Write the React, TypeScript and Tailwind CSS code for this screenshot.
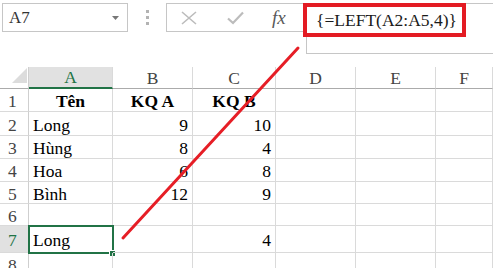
import React from 'react';

type Cell = { t?: string; a?: 'l' | 'r' | 'c'; b?: boolean };

const widths = ['w-[84px]', 'w-[80px]', 'w-[83px]', 'w-[80px]', 'w-[80px]', 'flex-1'];
const letters = ['A', 'B', 'C', 'D', 'E', 'F'];

const rows: { n: string; h: string; cells: Cell[] }[] = [
  { n: '1', h: 'h-[23px]', cells: [{ t: 'Tên', a: 'c', b: true }, { t: 'KQ A', a: 'c', b: true }, { t: 'KQ B', a: 'c', b: true }] },
  { n: '2', h: 'h-[24px]', cells: [{ t: 'Long' }, { t: '9', a: 'r' }, { t: '10', a: 'r' }] },
  { n: '3', h: 'h-[23px]', cells: [{ t: 'Hùng' }, { t: '8', a: 'r' }, { t: '4', a: 'r' }] },
  { n: '4', h: 'h-[23px]', cells: [{ t: 'Hoa' }, { t: '6', a: 'r' }, { t: '8', a: 'r' }] },
  { n: '5', h: 'h-[22px]', cells: [{ t: 'Bình' }, { t: '12', a: 'r' }, { t: '9', a: 'r' }] },
  { n: '6', h: 'h-[22px]', cells: [] },
  { n: '7', h: 'h-[27px]', cells: [{ t: 'Long' }, {}, { t: '4', a: 'r' }] },
  { n: '8', h: 'h-[23px]', cells: [] },
];

function alignClass(a?: 'l' | 'r' | 'c') {
  if (a === 'r') return 'justify-end pr-[4px]';
  if (a === 'c') return 'justify-center';
  return 'justify-start pl-[4px]';
}

function Toolbar() {
  return (
    <div className="h-[67px] flex items-start pt-[3px] pl-[2px]">
      {/* Name box */}
      <div className="w-[126px] h-[29px] border border-[#c6c6c6] flex items-center pl-[6px] text-[17px] text-[#333]">
        <span>A7</span>
        <svg className="ml-auto mr-[8px]" width="7" height="4" viewBox="0 0 7 4">
          <path d="M0 0 L7 0 L3.5 4 Z" fill="#777" />
        </svg>
      </div>

      {/* grip dots */}
      <div className="w-[38px] h-[29px] flex flex-col items-center justify-center gap-[3px]">
        <div className="w-[3px] h-[3px] bg-[#b3b3b3]" />
        <div className="w-[3px] h-[3px] bg-[#b3b3b3]" />
        <div className="w-[3px] h-[3px] bg-[#b3b3b3]" />
      </div>

      {/* Formula bar */}
      <div className="flex-1 flex items-start">
        <div className="w-[140px] h-[29px] border-l border-t border-b border-[#c6c6c6] flex items-center">
          <svg className="ml-[14px]" width="16" height="14" viewBox="0 0 16 14">
            <path d="M1 1 L15 13 M15 1 L1 13" stroke="#bcbcbc" strokeWidth="1.6" fill="none" />
          </svg>
          <svg className="ml-[30px]" width="17" height="14" viewBox="0 0 17 14">
            <path d="M1 7.5 L6 12 L16 1.5" stroke="#bcbcbc" strokeWidth="2.2" fill="none" />
          </svg>
          <span className="ml-[28px] italic text-[19px] text-[#595959] leading-none">fx</span>
        </div>
        <div className="flex-1 h-[51px] border-l border-t border-b border-[#c6c6c6] pl-[9px] pt-[6px] leading-[20px] text-[17.5px] text-[#1a1a1a]">
          {'{=LEFT(A2:A5,4)}'}
        </div>
      </div>
    </div>
  );
}

function HeaderRow() {
  return (
    <div className="flex h-[22px]">
      <div className="w-[29px] border-r border-b border-r-[#cfcfcf] border-b-[#ababab] relative">
        <svg className="absolute left-0 top-0" width="28" height="21" viewBox="0 0 28 21">
          <path d="M12 16 L27 1 L27 16 Z" fill="#dcdcdc" />
        </svg>
      </div>
      {letters.map((l, i) => (
        <div
          key={l}
          className={`${widths[i]} flex items-center justify-center border-r border-r-[#dadada] ${
            i === 0
              ? 'bg-[#e1e1e1] border-b-2 border-b-[#217346] text-[#217346]'
              : 'border-b border-b-[#ababab] text-[#444]'
          }`}
        >
          {l}
        </div>
      ))}
    </div>
  );
}

export default function App() {
  return (
    <div className="w-[493px] h-[268px] overflow-hidden relative bg-white font-['Liberation_Serif'] text-[17.5px] leading-[20px] text-black">
      <Toolbar />
      <HeaderRow />
      {rows.map(r => {
        const active = r.n === '7';
        return (
          <div key={r.n} className={`flex ${r.h}`}>
            <div
              className={`w-[29px] flex items-center pl-[8px] pt-[2px] border-r border-b border-r-[#cfcfcf] border-b-[#dadada] ${
                active ? 'bg-[#e1e1e1] text-[#217346]' : 'text-[#444]'
              }`}
            >
              {r.n}
            </div>
            {widths.map((w, i) => {
              const c = r.cells[i] || {};
              return (
                <div
                  key={i}
                  className={`${w} relative flex items-center pt-[2px] border-r border-b border-[#dadada] ${alignClass(c.a)} ${
                    c.b ? 'font-bold' : ''
                  }`}
                >
                  {c.t}
                  {active && i === 0 && (
                    <>
                      <div className="absolute -left-[1px] -top-[1px] w-[86px] h-[29px] border-2 border-[#217346]" />
                      <div className="absolute left-[80px] top-[24px] w-[7px] h-[7px] bg-[#217346] border border-white" />
                    </>
                  )}
                </div>
              );
            })}
          </div>
        );
      })}

      {/* annotation: red box around formula */}
      <div className="absolute left-[303px] top-[3px] w-[163px] h-[34px] border-[4px] border-[#e31b23] pointer-events-none" />
      {/* annotation: red arrow line */}
      <svg className="absolute left-0 top-0 pointer-events-none" width="493" height="268" viewBox="0 0 493 268">
        <line x1="123" y1="238" x2="298" y2="48" stroke="#e61e26" strokeWidth="3" strokeLinecap="round" />
      </svg>
    </div>
  );
}
